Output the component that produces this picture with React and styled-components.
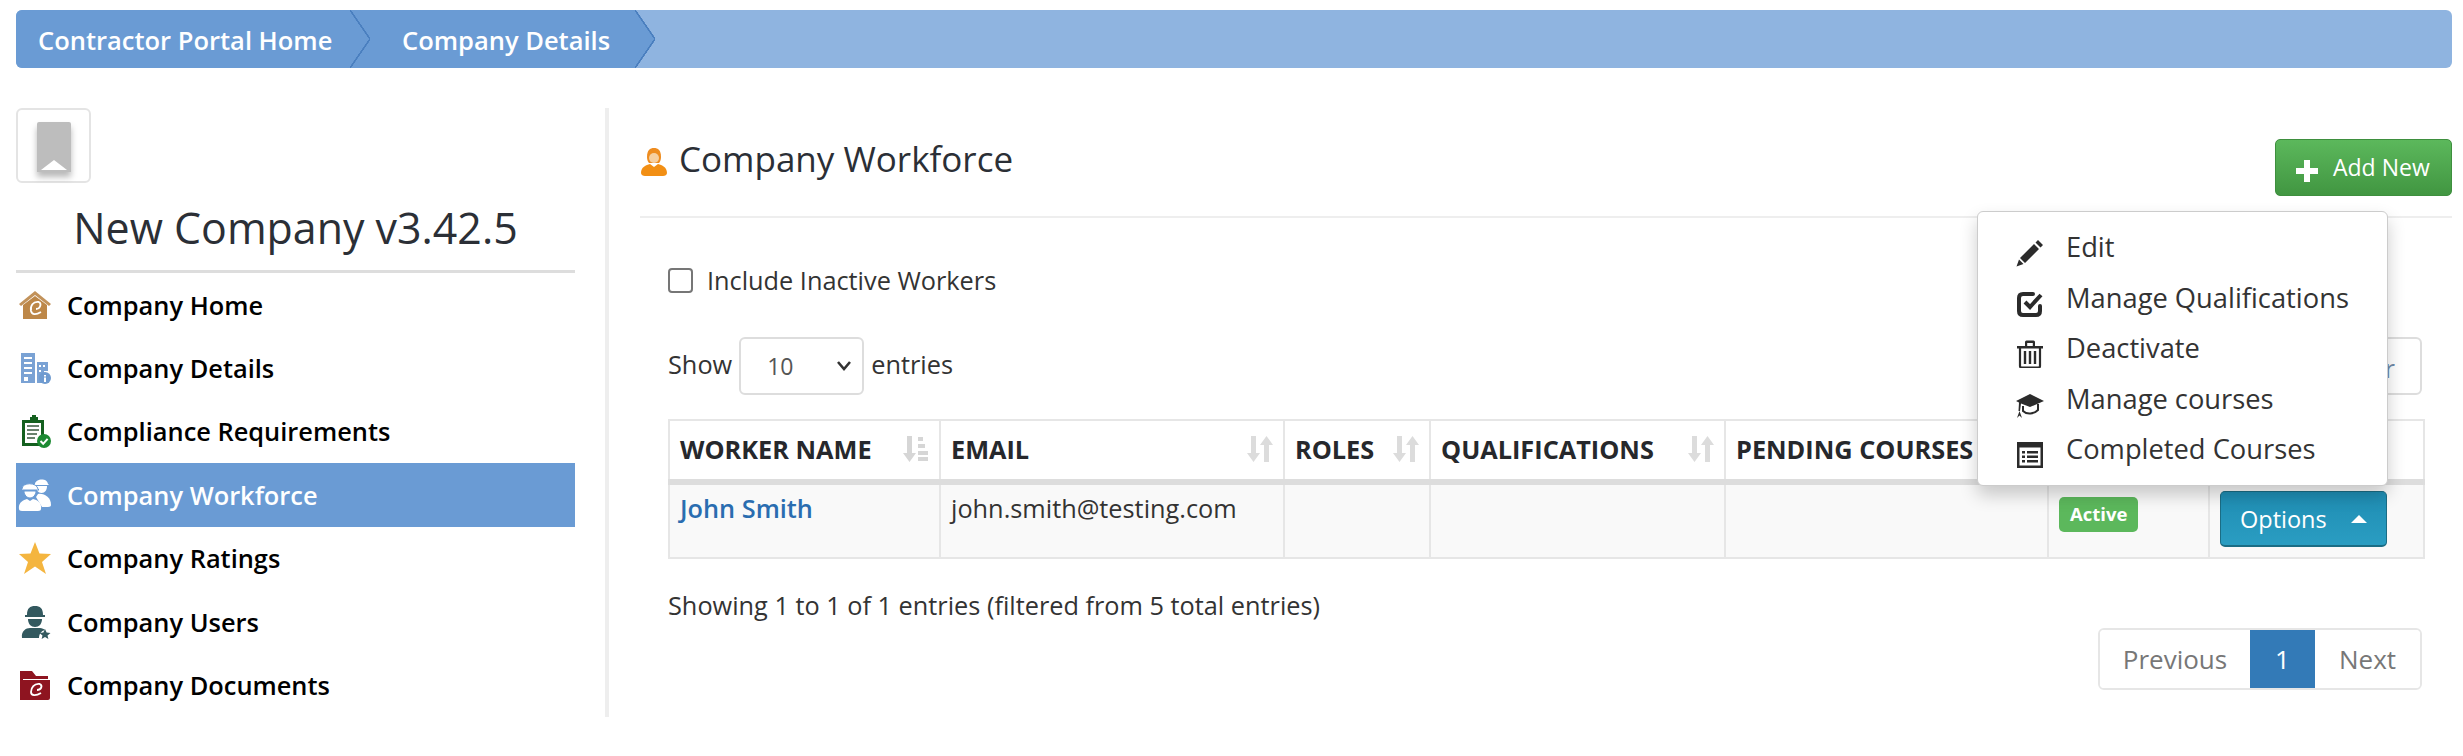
import styled, { createGlobalStyle } from "styled-components";

const GlobalStyle = createGlobalStyle`
  html, body {
    margin: 0;
    background: #fff;
    font-family: "Open Sans", "Liberation Sans", sans-serif;
    color: #333;
  }
  * { box-sizing: border-box; }
`;

const HomeIcon = () => (
  <svg width="34" height="34" viewBox="0 0 34 34">
    <path d="M17 3 L33 16 L31 18 L17 7 L3 18 L1 16 Z" fill="#c2925a" />
    <path d="M5 17 L17 8 L29 17 V31 H5 Z" fill="#bd8748" />
    <path d="M21 14 c-6 -1 -9 4 -8 9 c1 4 5 4 10 1 M21 14 c3 2 1 7 -3 7" fill="none" stroke="#fff" strokeWidth="1.8" />
  </svg>
);
const BuildingIcon = () => (
  <svg width="34" height="34" viewBox="0 0 34 34">
    <path d="M3 2 H17 V32 H3 Z M19 11 H30 V20 H26 V32 H19 Z" fill="#7aa2d4" />
    <path d="M6 6 H14 V8 H6 Z M6 11 H14 V13 H6 Z M6 16 H14 V18 H6 Z M6 21 H14 V23 H6 Z M6 26 H10 V30 H6 Z M21 14 H23 V16 H21 Z M25 14 H27 V16 H25 Z M21 19 H23 V21 H21 Z" fill="#fff" />
    <circle cx="27" cy="27" r="6" fill="#6f9bd0" />
    <path d="M26 24 H28 V25.5 H26 Z M26 26.5 H28 V31 H26 Z" fill="#fff" />
  </svg>
);
const ClipboardIcon = () => (
  <svg width="34" height="34" viewBox="0 0 34 34">
    <path d="M4 6 H12 V3 H14 V1 H18 V3 H20 V6 H26 V32 H4 Z" fill="#14601f" />
    <rect x="7" y="9" width="16" height="20" fill="#fff" />
    <path d="M9 12 H21 M9 16 H21 M9 20 H19 M9 24 H17" stroke="#3a5a3f" strokeWidth="1.6" />
    <circle cx="26" cy="27" r="7" fill="#1c8a32" />
    <path d="M22.5 27 L25.2 29.8 L29.6 24.8" fill="none" stroke="#fff" strokeWidth="2" />
  </svg>
);
const WorkersIcon = () => (
  <svg width="34" height="34" viewBox="0 0 34 34">
    <path d="M17 6 C17 1 29 -1 30 6 L31 7 H16 Z" fill="#fff" />
    <path d="M18 8 H29 C29 12 27 15 23.5 15 C20 15 18 12 18 8 Z" fill="#fff" />
    <path d="M20 16 C26 15 33 19 33 27 C33 28 32 29 30 29 H24 L18 19 Z" fill="#fff" />
    <path d="M4 11 C4 4 19 4 20 11 L21 12 H3 Z" fill="#fff" stroke="#6a9bd4" strokeWidth="1" />
    <path d="M6 13 H18 C18 17 15 20 12 20 C9 20 6 17 6 13 Z" fill="#fff" stroke="#6a9bd4" strokeWidth="1" />
    <path d="M1 31 C0 25 5 22 9 21 L12 23 L15 21 C20 22 24 25 23 31 C23 32 22 33 20 33 H4 C2 33 1 32 1 31 Z" fill="#fff" />
  </svg>
);
const StarIcon = () => (
  <svg width="34" height="34" viewBox="0 0 34 34">
    <path d="M17 1 L21.5 12.5 L33 13 L24 21 L28 33 L17 25.5 L6 33 L10 21 L1 13 L12.5 12.5 Z" fill="#f4b53f" />
  </svg>
);
const UserIcon = () => (
  <svg width="34" height="34" viewBox="0 0 34 34">
    <path d="M9 10 C9 3 12 1 17 1 C22 1 25 3 25 10 H27 V12 H7 V10 Z" fill="#33595f" />
    <path d="M10 14 H24 C24 19 21 22 17 22 C13 22 10 19 10 14 Z" fill="#33595f" />
    <path d="M4 33 C3 26 8 23 12 23 H22 C24 23 26 24 27 25 C23 26 21 29 21 33 Z" fill="#33595f" />
    <path d="M27 24 L28.6 27.6 L32.5 28 L29.5 30.6 L30.4 34 L27 32 L23.6 34 L24.5 30.6 L21.5 28 L25.4 27.6 Z" fill="#33595f" />
  </svg>
);
const FolderIcon = () => (
  <svg width="34" height="34" viewBox="0 0 34 34">
    <path d="M2 3 H14 L18 8 H30 V11 H5 V32 H2 Z" fill="#8e1420" />
    <path d="M4 12 H32 V30 Q32 32 30 32 H4 Z" fill="#8e1420" />
    <path d="M22 16 c-6 -1 -9 4 -9 8 c0 4 5 4 10 1 M22 16 c3 2 1 6 -3 6" fill="none" stroke="#fff" strokeWidth="1.8" />
  </svg>
);
const PersonIcon = () => (
  <svg width="28" height="30" viewBox="0 0 28 30">
    <path d="M7 10 C7 3 10 1 14 1 C18 1 21 3 21 10 C21 13 20 15 19 16 H9 C8 15 7 13 7 10 Z" fill="#ee8c1f" />
    <ellipse cx="14" cy="11" rx="5" ry="5" fill="#f6cfa0" />
    <path d="M1 26 C1 20 6 18 10 17 L14 20 L18 17 C22 18 27 20 27 26 C27 28 25 29 23 29 H5 C3 29 1 28 1 26 Z" fill="#f28f14" />
  </svg>
);
const PlusIcon = () => (
  <svg width="24" height="24" viewBox="0 0 24 24">
    <path d="M9 1 H15 V9 H23 V15 H15 V23 H9 V15 H1 V9 H9 Z" fill="#fff" />
  </svg>
);
const SortIcon = ({ active }) => (
  <svg width="26" height="28" viewBox="0 0 26 28">
    {active ? (
      <>
        <path d="M4 1 H9 V18 H13 L6.5 27 L0 18 H4 Z" fill="#d6d6d6" />
        <path d="M15 2 H20 V6 H15 Z M15 9 H22 V13 H15 Z M15 16 H25 V20 H15 Z M15 22 H25 V26 H15 Z" fill="#d6d6d6" />
      </>
    ) : (
      <>
        <path d="M4 1 H9 V18 H13 L6.5 27 L0 18 H4 Z" fill="#dcdcdc" />
        <path d="M17 27 H22 V10 H26 L19.5 1 L13 10 H17 Z" fill="#dcdcdc" />
      </>
    )}
  </svg>
);

const PencilGlyph = () => (
  <svg viewBox="0 0 28 28">
    <path d="M22 1 L27 6 L24.5 8.5 L19.5 3.5 Z M18 5 L23 10 L9 24 L4 19 Z M3 20.5 L7.5 25 L0.5 27.5 Z" fill="currentColor" />
  </svg>
);
const CheckGlyph = () => (
  <svg viewBox="0 0 28 28">
    <path d="M17 4 H7 Q3 4 3 8 V21 Q3 25 7 25 H20 Q24 25 24 21 V16" fill="none" stroke="currentColor" strokeWidth="4" strokeLinecap="round" />
    <path d="M9 12 L14 17 L25 5" fill="none" stroke="currentColor" strokeWidth="4" />
  </svg>
);
const TrashGlyph = () => (
  <svg viewBox="0 0 28 28">
    <path d="M1 6 H27 V8.5 H1 Z M9 6 V2 Q9 0.5 10.5 0.5 H17.5 Q19 0.5 19 2 V6 H16.8 V3 H11.2 V6 Z" fill="currentColor" />
    <path d="M4 8 V26 Q4 27.5 5.5 27.5 H22.5 Q24 27.5 24 26 V8" fill="none" stroke="currentColor" strokeWidth="2.2" />
    <path d="M9 11 V24 M14 11 V24 M19 11 V24" stroke="currentColor" strokeWidth="2.4" />
  </svg>
);
const CapGlyph = () => (
  <svg viewBox="0 0 28 28">
    <path d="M14 3 L28 10 L14 16 L5 12.5 L4 20 L2.5 20 L3 11.5 L0 10 Z" fill="currentColor" />
    <path d="M7 15 V20 C11 24 18 23 22 19 V13" fill="none" stroke="currentColor" strokeWidth="2" />
    <path d="M3.5 20 L1 27 L3.5 24.5 L6 27 Z" fill="currentColor" />
  </svg>
);
const ListGlyph = () => (
  <svg viewBox="0 0 28 28">
    <path d="M1 1 H27 V27 H1 Z M3.5 6.5 V24.5 H24.5 V6.5 Z" fill="currentColor" fillRule="evenodd" />
    <path d="M6 10 H9 V12.5 H6 Z M11 10 H22 V12.5 H11 Z M6 14.5 H9 V17 H6 Z M11 14.5 H22 V17 H11 Z M6 19 H9 V21.5 H6 Z M11 19 H22 V21.5 H11 Z" fill="currentColor" />
  </svg>
);

const Page = styled.div`
  padding: 10px 11px 0 16px;
`;

const Breadcrumb = styled.div`
  display: flex;
  height: 58px;
  background: #8fb4e0;
  border-radius: 6px;
  overflow: hidden;
`;

const Crumb = styled.a`
  position: relative;
  display: flex;
  align-items: center;
  width: ${(p) => p.$width}px;
  padding: 2px 0 0 ${(p) => p.$pad}px;
  background: #6a9bd4;
  color: #fff;
  font-size: 25.5px;
  font-weight: 600;
  white-space: nowrap;
  &::after {
    content: "";
    position: absolute;
    z-index: 1;
    top: 0;
    right: -20px;
    width: 20px;
    height: 58px;
    background: #6a9bd4;
    clip-path: polygon(0 0, 100% 50%, 0 100%);
  }
  &::before {
    content: "";
    position: absolute;
    z-index: 2;
    top: 0;
    right: -20px;
    width: 20px;
    height: 58px;
    background: linear-gradient(to bottom right, transparent 47%, #4a7fbf 48%, #4a7fbf 52%, transparent 53%) bottom / 100% 50% no-repeat,
      linear-gradient(to top right, transparent 47%, #4a7fbf 48%, #4a7fbf 52%, transparent 53%) top / 100% 50% no-repeat;
  }
`;

const Body = styled.div`
  display: flex;
  margin-top: 40px;
`;

const Sidebar = styled.aside`
  width: 559px;
  flex: none;
`;

const LogoBox = styled.div`
  display: flex;
  align-items: flex-start;
  justify-content: center;
  width: 75px;
  height: 75px;
  padding-top: 12px;
  border: 2px solid #e4e4e4;
  border-radius: 6px;
  svg {
    filter: drop-shadow(0 5px 3px rgba(0, 0, 0, 0.28));
  }
`;

const CompanyName = styled.h2`
  margin: 17px 0 0;
  height: 73px;
  border-bottom: 3px solid #ddd;
  text-align: center;
  font-size: 42.9px;
  line-height: 56px;
  font-weight: 400;
  color: #2b2f36;
`;

const Nav = styled.nav`
  display: flex;
  flex-direction: column;
`;

const NavRow = styled.a`
  display: flex;
  align-items: center;
  gap: 15px;
  height: 63.4px;
  padding-left: 2px;
  background: ${(p) => (p.$active ? "#6a9bd4" : "transparent")};
  color: ${(p) => (p.$active ? "#fff" : "#000")};
  font-size: 25.4px;
  font-weight: 600;
  svg {
    flex: none;
  }
`;

const Divider = styled.div`
  flex: none;
  width: 4px;
  height: 609px;
  margin: 0 31px 0 30px;
  background: #eeeeee;
`;

const Main = styled.main`
  flex: 1;
  min-width: 0;
`;

const MainHeader = styled.div`
  display: flex;
  justify-content: space-between;
  height: 110px;
  padding-top: 31px;
  border-bottom: 2px solid #eee;
`;

const Title = styled.h3`
  display: flex;
  align-items: center;
  gap: 11px;
  margin: 0;
  height: 38px;
  font-size: 35px;
  font-weight: 400;
  color: #2b2f36;
  svg {
    margin-top: 8px;
  }
`;

const AddButton = styled.button`
  display: flex;
  align-items: center;
  gap: 14px;
  width: 177px;
  height: 57px;
  padding: 0 0 0 19px;
  border: 1px solid #3e8f3e;
  border-radius: 5px;
  background: linear-gradient(#5cb85c, #419641);
  color: #fff;
  font: 400 23px "Open Sans", sans-serif;
  svg {
    margin-top: 6px;
  }
  span {
    margin-top: -2px;
  }
`;

const Content = styled.div`
  padding: 0 30px 0 28px;
`;

const CheckRow = styled.label`
  display: flex;
  align-items: center;
  gap: 14px;
  margin-top: 48px;
  height: 28px;
  font-size: 25.3px;
  color: #333;
`;

const CheckBox = styled.span`
  width: 25px;
  height: 25px;
  border: 2px solid #767676;
  border-radius: 4px;
  background: #fff;
`;

const TableTools = styled.div`
  display: flex;
  justify-content: space-between;
  margin-top: 43px;
  height: 58px;
`;

const Length = styled.div`
  display: flex;
  align-items: center;
  gap: 7px;
  font-size: 25.3px;
  padding-bottom: 4px;
`;

const LengthSelect = styled.select`
  appearance: none;
  width: 125px;
  height: 58px;
  margin-top: 4px;
  padding-left: 26px;
  border: 2px solid #ddd;
  border-radius: 6px;
  background: #fff url("data:image/svg+xml,%3Csvg xmlns='http://www.w3.org/2000/svg' width='16' height='12'%3E%3Cpath d='M2 2 L8 9 L14 2' fill='none' stroke='%23333' stroke-width='2.6'/%3E%3C/svg%3E") no-repeat right 10px center;
  color: #555;
  font: 400 23px "Open Sans", sans-serif;
`;

const SearchBox = styled.input`
  width: 300px;
  height: 58px;
  padding: 4px 25px 0 0;
  border: 2px solid #ddd;
  border-radius: 6px;
  text-align: right;
  font: 400 25px "Open Sans", sans-serif;
  &::placeholder {
    color: #6f8aa8;
  }
`;

const Table = styled.table`
  width: 1755px;
  margin-top: 24px;
  border-collapse: collapse;
  table-layout: fixed;
  border: 2px solid #e6e6e6;
`;

const HeadCell = styled.th`
  width: ${(p) => p.$width}px;
  height: 62px;
  padding: 0 10px 2px;
  border: 2px solid #e6e6e6;
  border-bottom: 6px solid #dddddd;
  font-size: 25.3px;
  font-weight: 700;
  text-align: left;
  white-space: nowrap;
  color: #26282c;
`;

const HeadInner = styled.div`
  display: flex;
  align-items: center;
  justify-content: space-between;
`;

const Cell = styled.td`
  height: 76px;
  padding: 6px 10px 0;
  vertical-align: top;
  background: #f9f9f9;
  border: 2px solid #e6e6e6;
  font-size: 25.3px;
`;

const WorkerLink = styled.a`
  color: #2a6db0;
  font-weight: 600;
`;

const Badge = styled.span`
  display: inline-block;
  margin-top: 6px;
  padding: 0 11px;
  height: 35px;
  line-height: 33px;
  border-radius: 5px;
  background: #5cb85c;
  color: #fff;
  font-size: 18.5px;
  font-weight: 700;
`;

const OptionsWrap = styled.div`
  position: relative;
  margin-top: 0;
  width: 167px;
`;

const OptionsButton = styled.button`
  display: flex;
  align-items: center;
  justify-content: space-between;
  width: 167px;
  height: 56px;
  padding: 0 19px 0 19px;
  border: 1px solid #1b6d85;
  border-bottom-width: 2px;
  border-radius: 5px;
  background: linear-gradient(#1f8db3, #2a9dc2);
  color: #fff;
  font: 400 23.5px "Open Sans", sans-serif;
`;

const Caret = styled.i`
  width: 0;
  height: 0;
  border-left: 8px solid transparent;
  border-right: 8px solid transparent;
  border-bottom: 8px solid #fff;
`;

const Menu = styled.ul`
  position: absolute;
  z-index: 5;
  right: -1px;
  bottom: calc(100% + 5px);
  width: 411px;
  margin: 0;
  padding: 10px 0 11px;
  list-style: none;
  background: #fff;
  border: 1px solid #ccc;
  border-radius: 6px;
  box-shadow: 0 9px 18px rgba(0, 0, 0, 0.2);
`;

const MenuItem = styled.li`
  display: flex;
  align-items: center;
  gap: 22px;
  height: 50.5px;
  padding-left: 38px;
  color: #333;
  font-size: 27.3px;
  svg {
    width: 28px;
    height: 28px;
    margin-top: 13px;
    color: #2b2b2b;
    flex: none;
  }
  span {
    white-space: nowrap;
  }
`;

const Info = styled.div`
  margin-top: 30px;
  height: 32px;
  line-height: 32px;
  font-size: 25.3px;
`;

const PagerRow = styled.div`
  display: flex;
  justify-content: flex-end;
  margin-top: 7px;
`;

const Pager = styled.div`
  display: flex;
  height: 62px;
  border: 2px solid #e6e6e6;
  border-radius: 6px;
  overflow: hidden;
`;

const PageLink = styled.a`
  display: flex;
  align-items: center;
  justify-content: center;
  width: ${(p) => p.$width}px;
  margin: ${(p) => (p.$active ? "-2px 0" : "0")};
  background: ${(p) => (p.$active ? "#337ab7" : "#fff")};
  color: ${(p) => (p.$active ? "#fff" : "#777")};
  font-size: 26px;
  font-weight: 500;
`;

const navItems = [
  { label: "Company Home", icon: <HomeIcon /> },
  { label: "Company Details", icon: <BuildingIcon /> },
  { label: "Compliance Requirements", icon: <ClipboardIcon /> },
  { label: "Company Workforce", icon: <WorkersIcon />, active: true },
  { label: "Company Ratings", icon: <StarIcon /> },
  { label: "Company Users", icon: <UserIcon /> },
  { label: "Company Documents", icon: <FolderIcon /> },
];

const columns = [
  { label: "WORKER NAME", width: 271, active: true },
  { label: "EMAIL", width: 344 },
  { label: "ROLES", width: 146 },
  { label: "QUALIFICATIONS", width: 295 },
  { label: "PENDING COURSES", width: 323, noSort: true },
  { label: "", width: 161, noSort: true },
  { label: "", width: 215, noSort: true },
];

const menuItems = [
  { label: "Edit", icon: <PencilGlyph /> },
  { label: "Manage Qualifications", icon: <CheckGlyph /> },
  { label: "Deactivate", icon: <TrashGlyph /> },
  { label: "Manage courses", icon: <CapGlyph /> },
  { label: "Completed Courses", icon: <ListGlyph /> },
];

export default function App() {
  return (
    <Page>
      <GlobalStyle />
      <Breadcrumb>
        <Crumb $width={334} $pad={22}>Contractor Portal Home</Crumb>
        <Crumb $width={285} $pad={52}>Company Details</Crumb>
      </Breadcrumb>
      <Body>
        <Sidebar>
          <LogoBox>
            <svg width="34" height="50" viewBox="0 0 34 50">
              <path d="M2 0 H32 Q34 0 34 2 V50 H0 V2 Q0 0 2 0 Z" fill="#bdbdbd" />
              <path d="M4 48 L17 38 L30 48 Z" fill="#fff" />
            </svg>
          </LogoBox>
          <CompanyName>New Company v3.42.5</CompanyName>
          <Nav>
            {navItems.map((item) => (
              <NavRow key={item.label} $active={item.active}>
                {item.icon}
                {item.label}
              </NavRow>
            ))}
          </Nav>
        </Sidebar>
        <Divider />
        <Main>
          <MainHeader>
            <Title>
              <PersonIcon />
              Company Workforce
            </Title>
            <AddButton>
              <PlusIcon />
              <span>Add New</span>
            </AddButton>
          </MainHeader>
          <Content>
            <CheckRow>
              <CheckBox />
              Include Inactive Workers
            </CheckRow>
            <TableTools>
              <Length>
                Show
                <LengthSelect defaultValue="10">
                  <option>10</option>
                  <option>25</option>
                  <option>50</option>
                </LengthSelect>
                entries
              </Length>
              <SearchBox placeholder="Filter" />
            </TableTools>
            <Table>
              <thead>
                <tr>
                  {columns.map((col, i) => (
                    <HeadCell key={i} $width={col.width}>
                      <HeadInner>
                        {col.label}
                        {!col.noSort && col.label && <SortIcon active={col.active} />}
                      </HeadInner>
                    </HeadCell>
                  ))}
                </tr>
              </thead>
              <tbody>
                <tr>
                  <Cell><WorkerLink>John Smith</WorkerLink></Cell>
                  <Cell>john.smith@testing.com</Cell>
                  <Cell />
                  <Cell />
                  <Cell />
                  <Cell><Badge>Active</Badge></Cell>
                  <Cell>
                    <OptionsWrap>
                      <Menu>
                        {menuItems.map((item) => (
                          <MenuItem key={item.label}>
                            {item.icon}
                            <span>{item.label}</span>
                          </MenuItem>
                        ))}
                      </Menu>
                      <OptionsButton>
                        Options
                        <Caret />
                      </OptionsButton>
                    </OptionsWrap>
                  </Cell>
                </tr>
              </tbody>
            </Table>
            <Info>Showing 1 to 1 of 1 entries (filtered from 5 total entries)</Info>
            <PagerRow>
              <Pager>
                <PageLink $width={150}>Previous</PageLink>
                <PageLink $width={65} $active>1</PageLink>
                <PageLink $width={105}>Next</PageLink>
              </Pager>
            </PagerRow>
          </Content>
        </Main>
      </Body>
    </Page>
  );
}
